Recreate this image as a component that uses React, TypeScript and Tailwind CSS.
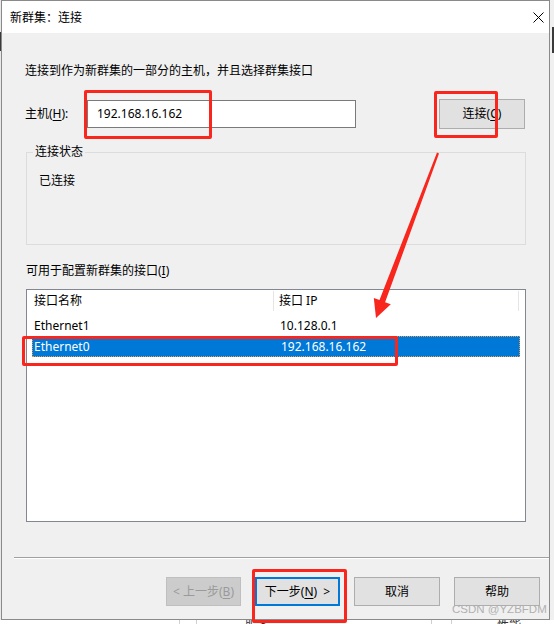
import React from "react";

type Row = { name: string; ip: string; selected?: boolean };

const rows: Row[] = [
  { name: "Ethernet1", ip: "10.128.0.1" },
  { name: "Ethernet0", ip: "192.168.16.162", selected: true },
];

function U({ c }: { c: string }) {
  return <span className="underline underline-offset-2">{c}</span>;
}

function WinButton({
  children,
  width,
  primary = false,
  disabled = false,
}: {
  children: React.ReactNode;
  width: string;
  primary?: boolean;
  disabled?: boolean;
}) {
  return (
    <div
      className={`flex h-[29px] items-center justify-center ${width} ${
        disabled
          ? "border border-[#bfbfbf] bg-[#cccccc] text-[#9a9a9a]"
          : primary
          ? "border-2 border-[#0078d7] bg-[#e1e1e1] text-black"
          : "border border-[#adadad] bg-[#e1e1e1] text-black"
      }`}
    >
      {children}
    </div>
  );
}

export default function App() {
  return (
    <div className="relative h-[624px] w-[554px] overflow-hidden bg-[#f0f0f0] font-['Noto_Sans','Noto_Sans_CJK_SC',sans-serif] text-[12px] leading-[16px] text-black">
      <div className="flex h-[620px]">
        {/* left edge of what is behind the dialog */}
        <div className="w-[1px] shrink-0 bg-[#e8e8e8]">
          <div className="mt-[32px] h-[19px] bg-[#3a3a3a]" />
        </div>

        {/* dialog */}
        <div className="flex h-[620px] w-[549px] shrink-0 flex-col border border-[#8a8a8a] bg-[#f0f0f0]">
          {/* title bar */}
          <div className="flex h-[32px] shrink-0 items-center justify-between bg-white pl-[8px] pr-[5px]">
            <span className="pt-[1px]">新群集：连接</span>
            <svg width="11" height="11" viewBox="0 0 11 11" className="mt-[1px]">
              <path d="M0.5 0.5 L10.5 10.5 M10.5 0.5 L0.5 10.5" stroke="#000" strokeWidth="1" fill="none" />
            </svg>
          </div>

          {/* body */}
          <div className="flex flex-1 flex-col">
            <div className="pl-[23px]">
              <div className="mt-[30px]">连接到作为新群集的一部分的主机，并且选择群集接口</div>

              <div className="mt-[20px] flex h-[30px] items-center">
                <span className="w-[62px]">
                  主机(<U c="H" />):
                </span>
                <div className="flex h-[28px] w-[269px] items-center border border-[#7a7a7a] bg-white pl-[9px]">
                  192.168.16.162
                </div>
                <div className="ml-[83px]">
                  <div className="flex h-[30px] w-[86px] items-center justify-center border border-[#adadad] bg-[#e1e1e1]">
                    连接(<U c="C" />)
                  </div>
                </div>
              </div>

              {/* status group */}
              <div className="relative ml-[1px] mt-[23px] h-[93px] w-[500px] border border-[#dcdcdc]">
                <span className="absolute left-[6px] top-[-9px] bg-[#f0f0f0] px-[2px]">连接状态</span>
                <div className="pl-[12px] pt-[20px]">已连接</div>
              </div>

              <div className="ml-[1px] mt-[18px]">
                可用于配置新群集的接口(<U c="I" />)
              </div>

              {/* interface list */}
              <div className="ml-[1px] mt-[10px] h-[233px] w-[500px] border border-[#828790] bg-white">
                <div className="flex h-[25px]">
                  <div className="w-[246px] pl-[7px] pt-[3px]">接口名称</div>
                  <div className="mt-[1px] h-[20px] w-[1px] bg-[#e5e5e5]" />
                  <div className="w-[244px] pl-[5px] pt-[3px]">接口 IP</div>
                  <div className="mt-[1px] h-[20px] w-[1px] bg-[#e5e5e5]" />
                </div>
                {rows.map((r) => (
                  <div
                    key={r.name}
                    className={`ml-[5px] flex h-[21px] w-[488px] items-center ${
                      r.selected ? "border border-dotted border-[#e89a4c] bg-[#0078d7] text-white" : ""
                    }`}
                  >
                    <div className={`w-[248px] ${r.selected ? "pl-[1px]" : "pl-[2px]"}`}>{r.name}</div>
                    <div>{r.ip}</div>
                  </div>
                ))}
              </div>
            </div>

            {/* separator */}
            <div className="ml-[12px] mt-[35px]">
              <div className="h-[1px] bg-[#a0a0a0]" />
              <div className="h-[1px] bg-white" />
            </div>

            {/* buttons */}
            <div className="mt-[18px] flex justify-end gap-[14px] pr-[9px]">
              <WinButton width="w-[75px]" disabled>
                &lt; 上一步(<U c="B" />)
              </WinButton>
              <WinButton width="w-[85px]" primary>
                下一步(<U c="N" />) &nbsp;&gt;
              </WinButton>
              <WinButton width="w-[86px]">取消</WinButton>
              <WinButton width="w-[86px]">帮助</WinButton>
            </div>
          </div>
        </div>

        {/* right edge of what is behind */}
        <div className="w-[4px] shrink-0 bg-[#f0f0f0]">
          <div className="ml-[2px] mt-[27px] h-[26px] w-[2px] bg-[#3a3a3a]" />
        </div>
      </div>

      {/* table behind the dialog, peeking out at the bottom */}
      <div className="flex h-[4px] overflow-hidden bg-white leading-[12px] text-[#333]">
        <div className="w-[180px] border-r border-[#d0d0d0]" />
        <div className="w-[17px] border-r border-[#d0d0d0]" />
        <div className="w-[235px] border-r border-[#d0d0d0] pl-[48px]">服务</div>
        <div className="w-[20px] border-r border-[#d0d0d0]" />
        <div className="pl-[45px]">性能</div>
      </div>

      {/* annotations drawn over the screenshot */}
      <div className="pointer-events-none absolute left-[84px] top-[90px] h-[49px] w-[128px] rounded-[2px] border-[3px] border-[#f8261c]" />
      <div className="pointer-events-none absolute left-[434px] top-[91px] h-[47px] w-[64px] rounded-[2px] border-[3px] border-[#f8261c]" />
      <div className="pointer-events-none absolute left-[22px] top-[336px] h-[30px] w-[376px] rounded-[2px] border-[3px] border-[#f8261c]" />
      <div className="pointer-events-none absolute left-[252px] top-[569px] h-[54px] w-[95px] rounded-[2px] border-[3px] border-[#f8261c]" />
      <svg className="pointer-events-none absolute left-0 top-0" width="554" height="624">
        <polygon
          points="437,152.6 439,153.4 385.1,302.2 390.8,304.3 376,318 373.8,297.9 379.5,300"
          fill="#f8261c"
        />
      </svg>
      <div className="pointer-events-none absolute left-[452px] top-[602px] font-['Liberation_Sans',sans-serif] text-[11.5px] leading-[14px] text-[#b0b0b0]">
        CSDN @YZBFDM
      </div>
    </div>
  );
}
